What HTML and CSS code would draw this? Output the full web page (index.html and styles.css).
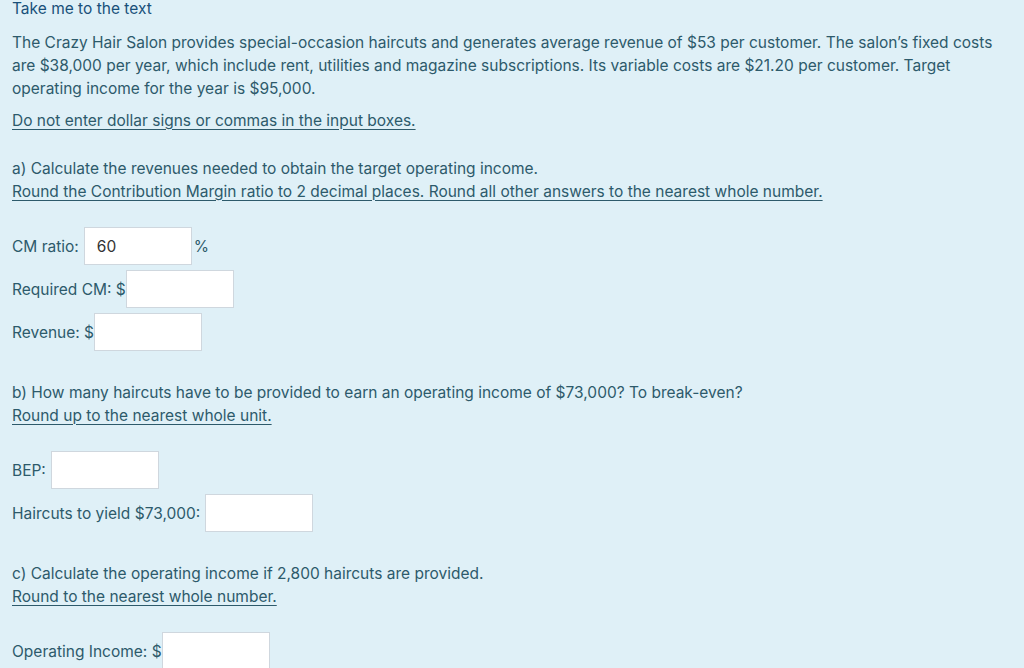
FILE: index.html
```html
<!DOCTYPE html>
<html lang="en">
<head>
<meta charset="utf-8">
<title>Crazy Hair Salon</title>
<link rel="stylesheet" href="styles.css">
</head>
<body>
<div class="page">
  <a class="skip" href="#">Take me to the text</a>
  <p class="intro">The Crazy Hair Salon provides special-occasion haircuts and generates average revenue of $53 per customer. The salon’s fixed costs are $38,000 per year, which include rent, utilities and magazine subscriptions. Its variable costs are $21.20 per customer. Target operating income for the year is $95,000.</p>
  <p class="note">Do not enter dollar signs or commas in the input boxes.</p>

  <section class="part">
    <p class="q">a) Calculate the revenues needed to obtain the target operating income.</p>
    <p class="note tight">Round the Contribution Margin ratio to 2 decimal places. Round all other answers to the nearest whole number.</p>
    <div class="rows">
      <div class="row"><span class="lbl">CM ratio:</span><input class="box spaced" type="text" value="60"><span class="unit">%</span></div>
      <div class="row"><span class="lbl">Required CM: $</span><input class="box" type="text"></div>
      <div class="row"><span class="lbl">Revenue: $</span><input class="box" type="text"></div>
    </div>
  </section>

  <section class="part">
    <p class="q">b) How many haircuts have to be provided to earn an operating income of $73,000? To break-even?</p>
    <p class="note tight">Round up to the nearest whole unit.</p>
    <div class="rows">
      <div class="row"><span class="lbl">BEP:</span><input class="box spaced" type="text"></div>
      <div class="row"><span class="lbl">Haircuts to yield $73,000:</span><input class="box spaced" type="text"></div>
    </div>
  </section>

  <section class="part">
    <p class="q">c) Calculate the operating income if 2,800 haircuts are provided.</p>
    <p class="note tight">Round to the nearest whole number.</p>
    <div class="rows">
      <div class="row"><span class="lbl">Operating Income: $</span><input class="box" type="text"></div>
    </div>
  </section>
</div>
</body>
</html>
```

FILE: styles.css
```css
html, body {
  margin: 0;
  padding: 0;
  background: #dff0f7;
}
body {
  font-family: Inter, "Noto Sans", "Liberation Sans", sans-serif;
  font-size: 15.5px;
  color: #2d5a6b;
  overflow: hidden;
  height: 668px;
}
.page {
  padding: 0 12px;
}
.skip {
  display: block;
  line-height: 18px;
  color: #19507a;
  text-decoration: none;
}
p {
  margin: 0;
  line-height: 23px;
}
.intro {
  margin-top: 12.5px;
}
.note {
  margin-top: 9px;
  text-decoration: underline;
  text-underline-offset: 3px;
  text-decoration-thickness: 1px;
}
.note.tight {
  margin-top: 0;
}
.part {
  margin-top: 25px;
}
.part + .part {
  margin-top: 29.5px;
}
.rows {
  margin-top: 24.5px;
  display: flex;
  flex-direction: column;
  gap: 5px;
}
.row {
  display: flex;
  align-items: center;
  height: 38px;
}
.box {
  box-sizing: border-box;
  width: 108px;
  height: 38px;
  margin: 0;
  border: 1px solid #cfd7de;
  border-radius: 0;
  background: #fff;
  padding: 0 12px;
  font: inherit;
  color: #333;
  outline: none;
}
.box.spaced {
  margin-left: 5px;
}
.unit {
  margin-left: 2px;
}
```
